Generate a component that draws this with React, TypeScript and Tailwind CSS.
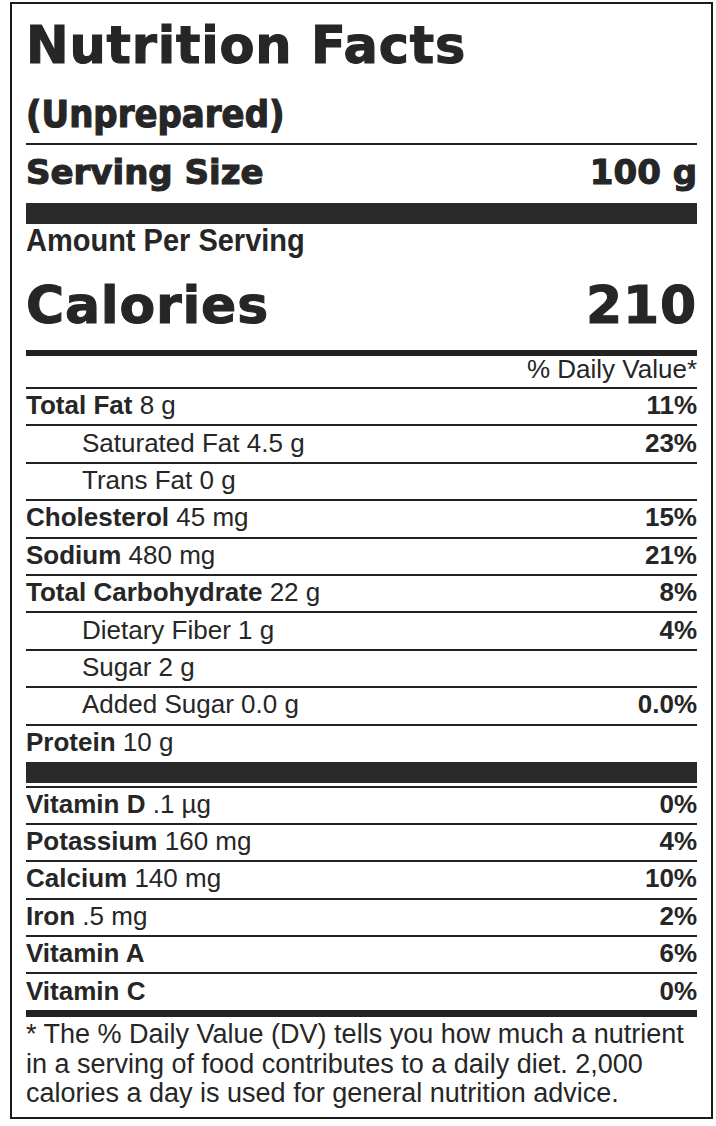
import React from 'react';

const heavy = "font-['DejaVu_Sans',sans-serif] font-bold [-webkit-text-stroke:1.1px_#262626]";
const body = "font-['Liberation_Sans',Arial,sans-serif]";

interface Nutrient {
  name: string;
  amount?: string;
  dv?: string;
  indent?: boolean;
}

const mainRows: Nutrient[] = [
  { name: 'Total Fat', amount: '8 g', dv: '11%' },
  { name: 'Saturated Fat 4.5 g', dv: '23%', indent: true },
  { name: 'Trans Fat 0 g', indent: true },
  { name: 'Cholesterol', amount: '45 mg', dv: '15%' },
  { name: 'Sodium', amount: '480 mg', dv: '21%' },
  { name: 'Total Carbohydrate', amount: '22 g', dv: '8%' },
  { name: 'Dietary Fiber 1 g', dv: '4%', indent: true },
  { name: 'Sugar 2 g', indent: true },
  { name: 'Added Sugar 0.0 g', dv: '0.0%', indent: true },
];

const vitaminRows: Nutrient[] = [
  { name: 'Vitamin D', amount: '.1 µg', dv: '0%' },
  { name: 'Potassium', amount: '160 mg', dv: '4%' },
  { name: 'Calcium', amount: '140 mg', dv: '10%' },
  { name: 'Iron', amount: '.5 mg', dv: '2%' },
  { name: 'Vitamin A', dv: '6%' },
  { name: 'Vitamin C', dv: '0%' },
];

function Row({ item, last }: { item: Nutrient; last?: boolean }) {
  return (
    <div
      className={`flex items-center justify-between pb-[3px] text-[26px] leading-[30px] ${
        last ? 'h-[36px]' : 'h-[37.4px] border-b-2 border-[#222]'
      }`}
    >
      <span className={`whitespace-nowrap ${item.indent ? 'pl-[56px]' : ''}`}>
        {item.indent ? (
          item.name
        ) : (
          <>
            <b>{item.name}</b>
            {item.amount ? ` ${item.amount}` : ''}
          </>
        )}
      </span>
      {item.dv && <b>{item.dv}</b>}
    </div>
  );
}

export default function App() {
  return (
    <div className={`w-[716px] h-[1126px] bg-white pt-[2px] pl-[10px] text-[#262626] ${body}`}>
      <div className="w-[703px] h-[1117px] border-2 border-[#1a1a1a] px-[14px]">
        <h1 className={`${heavy} text-[51px] leading-[60px] pt-[12px] tracking-[0.8px] whitespace-nowrap`}>
          Nutrition Facts
        </h1>
        <div
          className={`${heavy} text-[34px] leading-[40px] pt-[20px] pb-[7px] border-b-2 border-[#222] whitespace-nowrap [-webkit-text-stroke:0.6px_#262626]`}
        >
          <span className="inline-block scale-y-110 origin-bottom">(Unprepared)</span>
        </div>
        <div className={`${heavy} flex items-end justify-between h-[58px] pb-[11px] text-[34px] leading-[40px]`}>
          <span>Serving Size</span>
          <span>100 g</span>
        </div>
        <div className="h-[21px] bg-[#2a2a2a]" />
        <div className="h-[44px] pt-[1px] text-[29px] leading-[34px] font-bold">
          <span className="inline-block scale-y-110 origin-bottom">Amount Per Serving</span>
        </div>
        <div className={`${heavy} flex items-center justify-between h-[82px] pb-[8px] text-[52px] leading-[60px] tracking-[0.8px]`}>
          <span>Calories</span>
          <span>210</span>
        </div>
        <div className="h-[6px] bg-[#222]" />
        <div className="flex justify-end items-end h-[33px] pb-[3px] border-b-2 border-[#222] text-[26px] leading-[30px]">
          % Daily Value*
        </div>
        {mainRows.map((r) => (
          <Row key={r.name} item={r} />
        ))}
        <Row item={{ name: 'Protein', amount: '10 g' }} last />
        <div className="h-[21px] bg-[#2a2a2a]" />
        <div className="h-[3px] border-b-2 border-[#222] box-content" />
        {vitaminRows.map((r, i) => (
          <Row key={r.name} item={r} last={i === vitaminRows.length - 1} />
        ))}
        <div className="h-[7px] bg-[#222]" />
        <p className="pt-[3px] text-[27px] leading-[29.5px] whitespace-nowrap">
          * The % Daily Value (DV) tells you how much a nutrient
          <br />
          in a serving of food contributes to a daily diet. 2,000
          <br />
          calories a day is used for general nutrition advice.
        </p>
      </div>
    </div>
  );
}
